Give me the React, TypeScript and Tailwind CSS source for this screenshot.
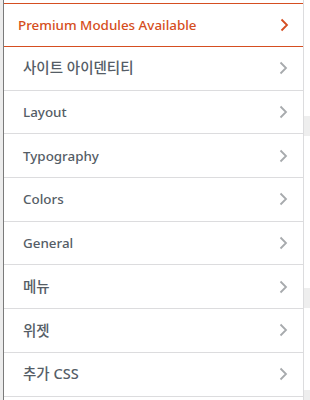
const sections = [
  { label: "사이트 아이덴티티", ko: true },
  { label: "Layout" },
  { label: "Typography" },
  { label: "Colors" },
  { label: "General" },
  { label: "메뉴", ko: true },
  { label: "위젯", ko: true },
  { label: "추가 CSS", ko: true },
];

function Chevron({ color }: { color: string }) {
  return (
    <svg width="9" height="14" viewBox="0 0 9 14" fill="none">
      <path d="M1.5 1.5 L7 7 L1.5 12.5" stroke={color} strokeWidth="1.8" />
    </svg>
  );
}

export default function App() {
  return (
    <div
      className="flex w-[310px] h-[400px] overflow-hidden bg-white"
      style={{ fontFamily: '"Noto Sans", "Noto Sans CJK KR", sans-serif' }}
    >
      <div className="w-[3px] bg-[#ececec]" />
      <div className="w-px bg-[#7a7a7a]" />

      <div className="w-[300px] border-r border-[#dcdcde] pt-[3px]">
        <div className="flex h-[44px] items-center justify-between border-y border-[#d54e21] pl-[14px] pr-[14px] text-[13.4px] font-medium text-[#d54e21]">
          <span>Premium Modules Available</span>
          <Chevron color="#d54e21" />
        </div>
        {sections.map((s) => (
          <div
            key={s.label}
            className={
              s.ko
                ? "flex h-[43.7px] items-center justify-between border-b border-[#dcdcde] pl-[19px] pr-[15px] text-[14.5px] font-medium text-[#555d66]"
                : "flex h-[43.7px] items-center justify-between border-b border-[#dcdcde] pl-[19px] pr-[15px] text-[13.4px] font-medium text-[#555d66]"
            }
          >
            <span>{s.label}</span>
            <Chevron color="#a7aaad" />
          </div>
        ))}
      </div>

      <div className="flex w-[6px] flex-col">
        <div className="h-[116px]" />
        <div className="h-[20px] bg-[#eeeeee]" />
        <div className="h-[152px]" />
        <div className="h-[20px] bg-[#eeeeee]" />
        <div className="h-[82px]" />
        <div className="h-[10px] bg-[#eeeeee]" />
      </div>
    </div>
  );
}
